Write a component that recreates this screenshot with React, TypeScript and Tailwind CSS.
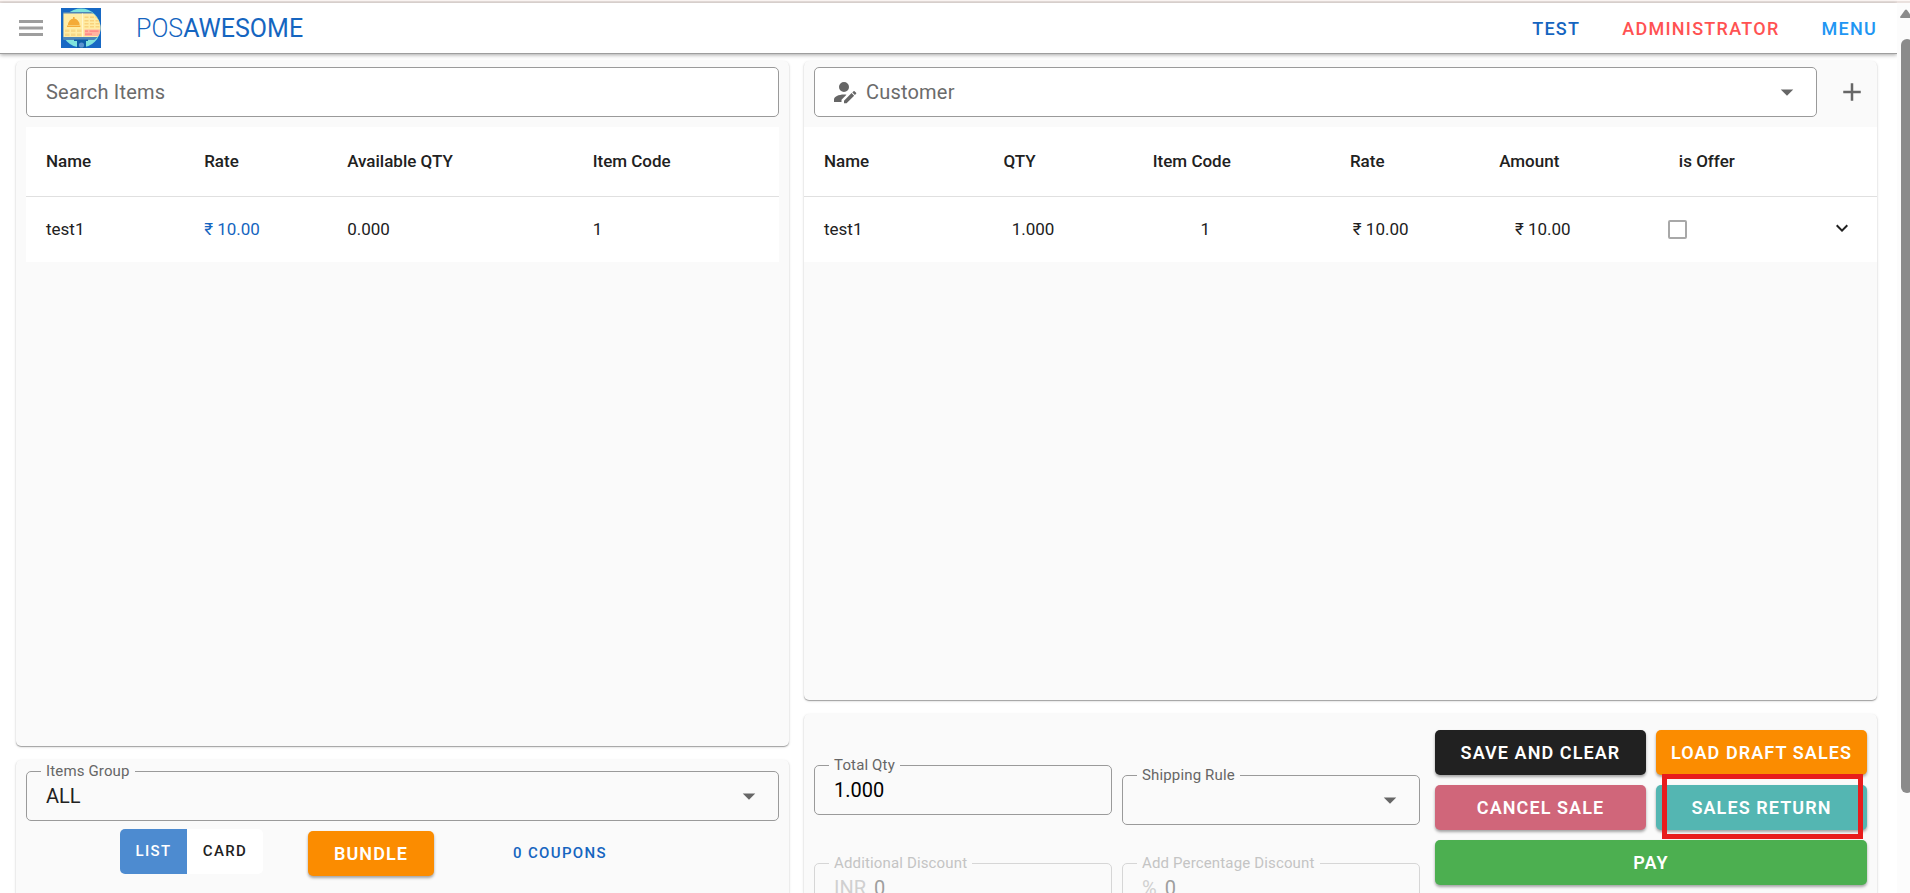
import { useState } from 'react';
import type { ReactNode } from 'react';

const items = [{ name: 'test1', rate: '₹ 10.00', qty: '0.000', code: '1' }];
const cart = [{ name: 'test1', qty: '1.000', code: '1', rate: '₹ 10.00', amount: '₹ 10.00' }];

const card = 'bg-[#fafafa] shadow-[0_1px_1px_rgba(0,0,0,0.3),0_1px_3px_rgba(0,0,0,0.14)]';
const action = 'h-[45px] rounded-[5px] text-white text-[18px] font-semibold uppercase tracking-[0.06em] whitespace-nowrap shadow-[0_2px_3px_rgba(0,0,0,0.35)]';

function Logo() {
    return (
        <svg viewBox="0 0 40 40" className="size-10 shrink-0" aria-hidden="true">
            <defs>
                <clipPath id="disc"><path d="M0 4H30C36 8 39.500 14 39.500 20S36 32 30 33H0Z" /></clipPath>
            </defs>
            <rect width="40" height="40" fill="#1768c4" />
            <circle cx="20" cy="20" r="19.500" fill="#7fe3dc" />
            <path d="M0 4H3V33H0Z" fill="#1768c4" />
            <g clipPath="url(#disc)">
                <rect x="2" y="4" width="38" height="28" rx="1" fill="#4e86b8" />
                <rect x="2.5" y="5.5" width="38" height="23.5" fill="#ffeca5" />
                <rect x="21" y="5.5" width="1" height="23.5" fill="#fff6cf" />
                <path d="M7 17a5.8 6.5 0 0 1 11.6 0zM12 9h1.6v2H12zM6 17.6h13.4v1.5H6z" fill="#f4ab38" />
                <path d="M23.5 8.5h4v1.6h-4zM29 8.5h4v1.6h-4zM34.500 8.500h4v1.600h-4zM23.500 12h4v1.600h-4zM29 12h4v1.600h-4zM34.500 12h4v1.600h-4zM23.500 15h4v1.600h-4zM29 15h4v1.600h-4zM34.500 15h4v1.600h-4zM23.500 18h4v1.600h-4zM29 18h4v1.600h-4zM34.500 18h4v1.600h-4z" fill="#f9d27c" />
                <path d="M4 21.500h4.500v2.500H4zM10 21.500h4.500v2.500H10zM16 21.500h4.500v2.500H16zM4 25.500h4.500v2.500H4zM10 25.500h4.500v2.500H10zM16 25.500h4.500v2.500H16z" fill="#f8d886" />
                <rect x="23.500" y="21.500" width="15.500" height="6.500" fill="#ffb3a0" />
                <path d="M24 22.500h3v1.200h-3zM28.500 22.500h9v1.200h-9zM24 25.500h7v1.200h-7z" fill="#ff8080" />
            </g>
            <path d="M13 31.500H27V33H25V40H16V33H13Z" fill="#0e5fa8" />
            <circle cx="20.500" cy="37" r="2.600" fill="#5b93cf" />
        </svg>
    );
}

function MenuDown() {
    return (
        <svg viewBox="0 0 24 24" fill="#666" className="size-[30px] absolute right-3.5 top-[9px] pointer-events-none" aria-hidden="true">
            <path d="M7,10L12,15L17,10H7Z" />
        </svg>
    );
}

function Field({ id, label, disabled, children }: { id: string; label: string; disabled?: boolean; children: ReactNode }) {
    return (
        <div className={`relative h-[50px] flex items-center rounded-[5px] border text-[20px] ${disabled ? 'border-[#d6d6d6] text-[#9e9e9e]' : 'border-[#9a9a9a] text-[#212121]'}`}>
            <label htmlFor={id} className={`absolute left-3.5 -top-[11px] px-[5px] bg-[#fafafa] text-[15px] leading-5 tracking-[0.01em] ${disabled ? 'text-[#c4c4c4]' : 'text-[#666]'}`}>
                {label}
            </label>
            {children}
        </div>
    );
}

function SortHead({ children }: { children: ReactNode }) {
    return <th className="px-5 font-medium"><span className="pr-[27px] whitespace-nowrap">{children}</span></th>;
}

export default function App() {
    const [view, setView] = useState('list');
    const [isOffer, setIsOffer] = useState(false);

    return (
        <div className="h-screen flex overflow-hidden bg-white text-[#212121] font-[Roboto,sans-serif]">
            <div className="flex-1 min-w-0 flex flex-col">
                <div className="h-[3px] shrink-0 bg-[#fdf7f5] border-b-2 border-[#eae1de]" />
                <header className="h-[51px] shrink-0 flex items-center pl-[19px] pr-5 border-b border-[#9e9e9e] shadow-[0_1px_4px_rgba(0,0,0,0.35)]">
                    <button aria-label="Toggle menu" className="mr-[18px]">
                        <svg viewBox="0 0 24 16" fill="#9e9e9e" className="w-6 h-4">
                            <path d="M0 0h24v3H0zM0 6.500h24v3H0zM0 13h24v3H0z" />
                        </svg>
                    </button>
                    <Logo />
                    <h1 className="ml-[35px] pt-0.5 text-[25px] leading-8 text-[#1565c0]"><span className="font-light">POS</span>AWESOME</h1>
                    <nav className="ml-auto flex gap-[42px] text-[18px] font-medium tracking-[0.07em]">
                        <a href="#test" className="text-[#1565c0]">TEST</a>
                        <a href="#user" className="text-[#ff5252]">ADMINISTRATOR</a>
                        <button className="text-[#2196f3] tracking-[0.07em]">MENU</button>
                    </nav>
                </header>

                <main className="flex-1 min-h-0 grid grid-cols-[773fr_1073fr] gap-x-[15px] pt-[7px] pl-4 pr-5 overflow-hidden">
                    <div className="flex flex-col gap-3.5 min-h-0">
                        <section className={`${card} flex-1 rounded-[5px] px-2.5 pt-1.5`}>
                            <input
                                type="text"
                                aria-label="Search Items"
                                placeholder="Search Items"
                                className="block w-full h-[50px] rounded-[5px] border border-[#9a9a9a] bg-white px-[19px] text-[20px] tracking-[0.01em] placeholder:text-[#6b6b6b]"
                            />
                            <table className="w-full table-fixed mt-2.5 bg-white text-[17px] text-left">
                                <thead>
                                    <tr className="h-[69px] border-b border-[#e0e0e0]">
                                        <th className="w-[21%] px-5 font-medium">Name</th>
                                        <th className="w-[19%] px-5 font-medium">Rate</th>
                                        <th className="w-[32.6%] px-5 font-medium">Available QTY</th>
                                        <th className="px-5 font-medium">Item Code</th>
                                    </tr>
                                </thead>
                                <tbody>
                                    {items.map(item => (
                                        <tr key={item.name} className="h-[66px]">
                                            <td className="px-5">{item.name}</td>
                                            <td className="px-5 text-[#1565c0]">{item.rate}</td>
                                            <td className="px-5">{item.qty}</td>
                                            <td className="px-5">{item.code}</td>
                                        </tr>
                                    ))}
                                </tbody>
                            </table>
                        </section>

                        <section className={`${card} h-[133px] shrink-0 rounded-t-[5px] px-2.5 pt-[11px]`}>
                            <Field id="group" label="Items Group">
                                <select id="group" className="appearance-none size-full px-[19px] bg-transparent">
                                    <option>ALL</option>
                                </select>
                                <MenuDown />
                            </Field>
                            <div className="flex mt-2 pl-[94px] text-[15px] font-medium">
                                <div className="flex h-[45px] rounded-[5px] overflow-hidden">
                                    <button
                                        onClick={() => setView('list')}
                                        className={`w-[67px] tracking-[0.09em] ${view === 'list' ? 'bg-[#4d8bd0] text-white' : 'bg-white'}`}
                                    >
                                        LIST
                                    </button>
                                    <button
                                        onClick={() => setView('card')}
                                        className={`w-[76px] tracking-[0.09em] ${view === 'card' ? 'bg-[#4d8bd0] text-white' : 'bg-white'}`}
                                    >
                                        CARD
                                    </button>
                                </div>
                                <button className={`${action} bg-[#fb8c00] w-[126px] ml-[45px] mt-0.5`}>Bundle</button>
                                <button className="ml-[59px] mt-0.5 px-5 h-[45px] text-[#1565c0] tracking-[0.09em]">0 COUPONS</button>
                            </div>
                        </section>
                    </div>

                    <div className="flex flex-col gap-3.5 min-h-0 min-w-0">
                        <section className={`${card} flex-1 rounded-[5px] pt-1.5`}>
                            <div className="flex pl-2.5">
                                <div className="relative flex-1 h-[50px] flex items-center rounded-[5px] border border-[#9a9a9a] bg-white pl-3.5">
                                    <svg viewBox="0 0 24 24" fill="#666" className="size-[30px] shrink-0" aria-hidden="true">
                                        <path d="M21.7,13.35L20.7,14.35L18.65,12.3L19.65,11.3C19.86,11.09 20.21,11.09 20.42,11.3L21.7,12.58C21.91,12.79 21.91,13.14 21.7,13.35M12,18.94L18.06,12.88L20.11,14.93L14.06,21H12V18.94M12,14C7.58,14 4,15.79 4,18V20H10V18.11L14,14.11C13.34,14.03 12.67,14 12,14M12,4A4,4 0 0,0 8,8A4,4 0 0,0 12,12A4,4 0 0,0 16,8A4,4 0 0,0 12,4Z" />
                                    </svg>
                                    <input
                                        type="text"
                                        aria-label="Customer"
                                        placeholder="Customer"
                                        className="flex-1 h-full pl-[7px] text-[20px] tracking-[0.01em] placeholder:text-[#6b6b6b]"
                                    />
                                    <MenuDown />
                                </div>
                                <button aria-label="New customer" className="w-[60px] pl-2.5 flex items-center justify-center">
                                    <svg viewBox="0 0 24 24" fill="#666" className="size-[30px]">
                                        <path d="M19,13H13V19H11V13H5V11H11V5H13V11H19V13Z" />
                                    </svg>
                                </button>
                            </div>
                            <table className="w-full table-fixed mt-2.5 bg-white text-[17px] text-center">
                                <colgroup>
                                    <col className="w-[16.4%]" />
                                    <col className="w-[9.9%]" />
                                    <col className="w-[22.2%]" />
                                    <col className="w-[10.5%]" />
                                    <col className="w-[19.7%]" />
                                    <col className="w-[13.4%]" />
                                    <col />
                                </colgroup>
                                <thead>
                                    <tr className="h-[69px] border-b border-[#e0e0e0]">
                                        <th className="px-5 font-medium text-left">Name</th>
                                        <SortHead>QTY</SortHead>
                                        <SortHead>Item Code</SortHead>
                                        <SortHead>Rate</SortHead>
                                        <SortHead>Amount</SortHead>
                                        <SortHead>is Offer</SortHead>
                                        <th />
                                    </tr>
                                </thead>
                                <tbody>
                                    {cart.map(row => (
                                        <tr key={row.name} className="h-[66px]">
                                            <td className="px-5 text-left">{row.name}</td>
                                            <td>{row.qty}</td>
                                            <td>{row.code}</td>
                                            <td>{row.rate}</td>
                                            <td>{row.amount}</td>
                                            <td className="px-5">
                                                <input
                                                    type="checkbox"
                                                    aria-label="is Offer"
                                                    checked={isOffer}
                                                    onChange={e => setIsOffer(e.target.checked)}
                                                    className="block appearance-none size-[19px] rounded-[2px] border-2 border-[#a8a8a8] checked:bg-[#1976d2]"
                                                />
                                            </td>
                                            <td>
                                                <button aria-label="Expand row" className="block ml-auto mr-5">
                                                    <svg viewBox="0 0 24 24" fill="#212121" className="size-[30px]">
                                                        <path d="M7.410,8.580L12,13.170L16.590,8.580L18,10L12,16L6,10L7.410,8.580Z" transform="translate(2.400 1.600) scale(0.8)" />
                                                    </svg>
                                                </button>
                                            </td>
                                        </tr>
                                    ))}
                                </tbody>
                            </table>
                        </section>

                        <section className={`${card} h-[179px] shrink-0 rounded-t-[5px] px-2.5 grid grid-cols-[606fr_432fr] gap-x-[15px] overflow-hidden`}>
                            <div className="grid grid-cols-2 gap-x-2.5 content-start pt-[51px]">
                                <Field id="qty" label="Total Qty">
                                    <input id="qty" type="text" readOnly value="1.000" className="w-full px-[19px] text-black" />
                                </Field>
                                <div className="pt-2.5">
                                    <Field id="shipping" label="Shipping Rule">
                                        <select id="shipping" className="appearance-none size-full px-[19px] bg-transparent">
                                            <option></option>
                                        </select>
                                        <MenuDown />
                                    </Field>
                                </div>
                                <div className="pt-[38px]">
                                    <Field id="discount" label="Additional Discount" disabled>
                                        <span className="pl-[19px] text-[#d0d0d0]">INR</span>
                                        <input id="discount" type="text" disabled value="0" className="w-full min-w-0 pl-2" />
                                    </Field>
                                </div>
                                <div className="pt-[38px]">
                                    <Field id="percent" label="Add Percentage Discount" disabled>
                                        <span className="pl-[19px] text-[#d0d0d0]">%</span>
                                        <input id="percent" type="text" disabled value="0" className="w-full min-w-0 pl-2" />
                                    </Field>
                                </div>
                            </div>
                            <div className="grid grid-cols-2 gap-2.5 content-start pt-4">
                                <button className={`${action} bg-[#212121]`}>Save and Clear</button>
                                <button className={`${action} bg-[#fb8c00]`}>Load Draft Sales</button>
                                <button className={`${action} bg-[#d0667a]`}>Cancel Sale</button>
                                <div className="relative grid">
                                    <button className={`${action} bg-[#54b6b2]`}>Sales Return</button>
                                    <div className="absolute left-1.5 right-1 -top-[11px] -bottom-[9px] z-10 border-5 border-[#e81c1c] pointer-events-none" />
                                </div>
                                <button className={`${action} bg-[#4caf50] col-span-2`}>Pay</button>
                            </div>
                        </section>
                    </div>
                </main>
            </div>

            {/* Scroll track */}
            <div className="w-[13px] shrink-0 bg-[#fcfcfc] overflow-hidden flex flex-col">
                <div className="h-[3px] shrink-0 bg-[#fdf7f5] border-b-2 border-[#eae1de]" />
                <svg viewBox="0 0 12 10" fill="#8b8b8b" className="w-3 h-2.5 ml-[3px] mt-1.5 shrink-0" aria-hidden="true">
                    <path d="M0 8L5 1Q6 0 7 1L12 8Q12 9 11 9H1Q0 9 0 8Z" />
                </svg>
                <div className="ml-1 mt-5 mb-[100px] flex-1 w-3 rounded-md bg-[#8b8b8b]" />
            </div>
        </div>
    );
}
